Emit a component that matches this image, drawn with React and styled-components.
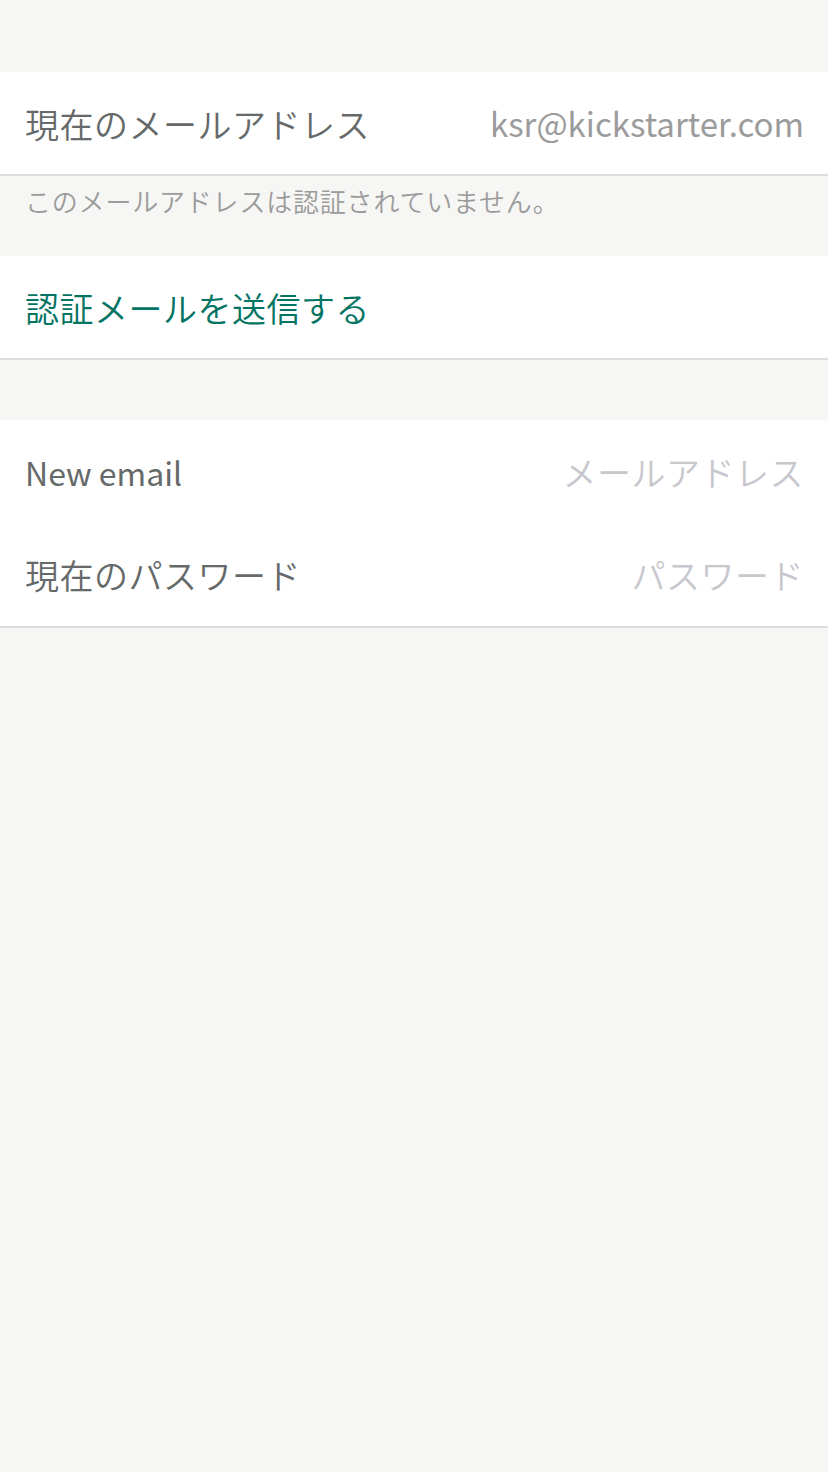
import React from "react"
import styled, { createGlobalStyle } from "styled-components"

const GlobalStyle = createGlobalStyle`
  html, body {
    margin: 0;
    padding: 0;
    background: #f6f6f4;
  }
  body {
    font-family: "Noto Sans CJK JP", "Noto Sans", sans-serif;
    font-weight: 350;
  }
`

const Page = styled.div`
  min-height: 1472px;
  background: #f6f6f4;
  padding-top: 72px;
  box-sizing: border-box;
`

const Section = styled.div`
  background: #fff;
  border-bottom: 2px solid #dcdcdc;
  margin-top: ${(p) => p.$gap || 0}px;
`

const Row = styled.div`
  display: flex;
  align-items: center;
  justify-content: space-between;
  height: ${(p) => p.$height || 102}px;
  padding: 0 24px 0 25px;
`

const Label = styled.span`
  font-size: ${(p) => (p.$latin ? 32 : 34)}px;
  font-weight: ${(p) => (p.$latin ? 400 : 350)};
  letter-spacing: ${(p) => (p.$latin ? 0 : 0.5)}px;
  color: ${(p) => (p.$accent ? "#037362" : "#656969")};
  white-space: nowrap;
`

const Value = styled.span`
  font-size: ${(p) => (p.$latin ? 33 : 34)}px;
  font-weight: ${(p) => (p.$latin ? 400 : 350)};
  letter-spacing: ${(p) => (p.$latin ? 0 : 0.5)}px;
  color: ${(p) => (p.$placeholder ? "#c7c7cd" : "#9b9b9b")};
  white-space: nowrap;
`

const Note = styled.div`
  height: 80px;
  padding: 6px 25px 0;
  box-sizing: border-box;
  font-size: 26px;
  letter-spacing: 0.8px;
  color: #9b9b9b;
`

export default function App() {
  return (
    <>
      <GlobalStyle />
      <Page>
        <Section>
          <Row>
            <Label>現在のメールアドレス</Label>
            <Value $latin>ksr@kickstarter.com</Value>
          </Row>
        </Section>
        <Note>このメールアドレスは認証されていません。</Note>
        <Section>
          <Row>
            <Label $accent>認証メールを送信する</Label>
          </Row>
        </Section>
        <Section $gap={60}>
          <Row $height={103}>
            <Label $latin>New email</Label>
            <Value $placeholder>メールアドレス</Value>
          </Row>
          <Row $height={103}>
            <Label>現在のパスワード</Label>
            <Value $placeholder>パスワード</Value>
          </Row>
        </Section>
      </Page>
    </>
  )
}
